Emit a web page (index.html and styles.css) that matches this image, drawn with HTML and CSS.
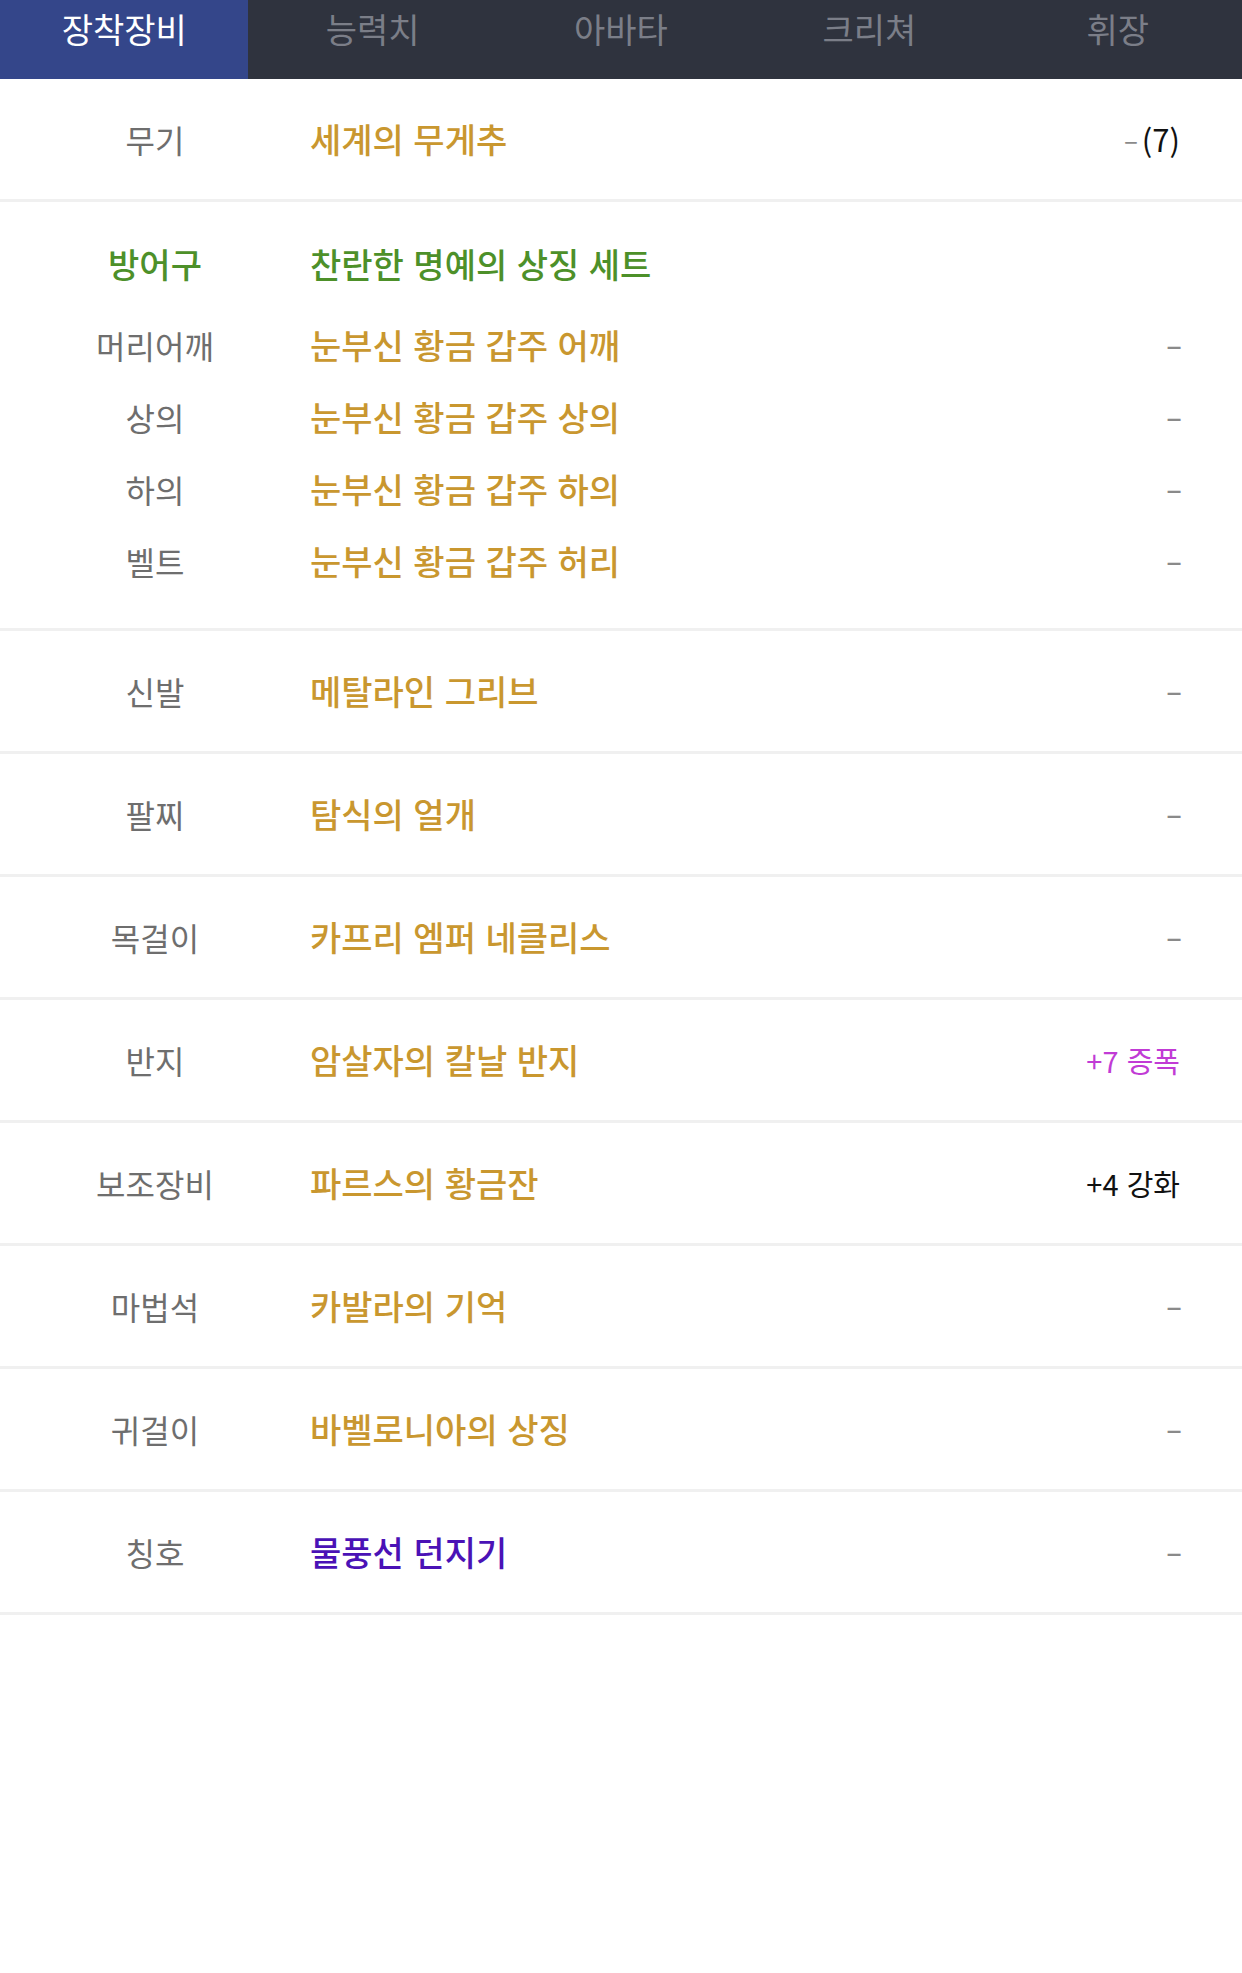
FILE: index.html
```html
<!DOCTYPE html>
<html lang="ko">
<head>
<meta charset="utf-8">
<title>장착장비</title>
<link rel="stylesheet" href="styles.css">
</head>
<body>
<nav class="tabs">
  <div class="tab active">장착장비</div>
  <div class="tab">능력치</div>
  <div class="tab">아바타</div>
  <div class="tab">크리쳐</div>
  <div class="tab">휘장</div>
</nav>
<main class="list">
  <div class="row">
    <span class="label">무기</span>
    <span class="name gold">세계의 무게추</span>
    <span class="value big"><span class="dash small">–</span>(7)</span>
  </div>
  <div class="group">
    <div class="sub head">
      <span class="label green">방어구</span>
      <span class="name green">찬란한 명예의 상징 세트</span>
      <span class="value"></span>
    </div>
    <div class="sub">
      <span class="label">머리어깨</span>
      <span class="name gold">눈부신 황금 갑주 어깨</span>
      <span class="value"><span class="dash">–</span></span>
    </div>
    <div class="sub">
      <span class="label">상의</span>
      <span class="name gold">눈부신 황금 갑주 상의</span>
      <span class="value"><span class="dash">–</span></span>
    </div>
    <div class="sub">
      <span class="label">하의</span>
      <span class="name gold">눈부신 황금 갑주 하의</span>
      <span class="value"><span class="dash">–</span></span>
    </div>
    <div class="sub">
      <span class="label">벨트</span>
      <span class="name gold">눈부신 황금 갑주 허리</span>
      <span class="value"><span class="dash">–</span></span>
    </div>
  </div>
  <div class="row">
    <span class="label">신발</span>
    <span class="name gold">메탈라인 그리브</span>
    <span class="value"><span class="dash">–</span></span>
  </div>
  <div class="row">
    <span class="label">팔찌</span>
    <span class="name gold">탐식의 얼개</span>
    <span class="value"><span class="dash">–</span></span>
  </div>
  <div class="row">
    <span class="label">목걸이</span>
    <span class="name gold">카프리 엠퍼 네클리스</span>
    <span class="value"><span class="dash">–</span></span>
  </div>
  <div class="row">
    <span class="label">반지</span>
    <span class="name gold">암살자의 칼날 반지</span>
    <span class="value amp">+7 증폭</span>
  </div>
  <div class="row">
    <span class="label">보조장비</span>
    <span class="name gold">파르스의 황금잔</span>
    <span class="value">+4 강화</span>
  </div>
  <div class="row">
    <span class="label">마법석</span>
    <span class="name gold">카발라의 기억</span>
    <span class="value"><span class="dash">–</span></span>
  </div>
  <div class="row">
    <span class="label">귀걸이</span>
    <span class="name gold">바벨로니아의 상징</span>
    <span class="value"><span class="dash">–</span></span>
  </div>
  <div class="row">
    <span class="label">칭호</span>
    <span class="name purple">물풍선 던지기</span>
    <span class="value"><span class="dash">–</span></span>
  </div>
</main>
</body>
</html>
```

FILE: styles.css
```css
* {
  box-sizing: border-box;
}

html, body {
  margin: 0;
  padding: 0;
  background: #ffffff;
}

body {
  font-family: "Noto Sans CJK KR", "Noto Sans", sans-serif;
  color: #000;
}

.tabs {
  display: grid;
  grid-template-columns: repeat(5, 1fr);
  height: 79px;
  background: #2f333e;
}

.tab {
  display: flex;
  justify-content: center;
  align-items: flex-start;
  padding-top: 9px;
  font-size: 34px;
  line-height: 1.2;
  color: #7b7e88;
}

.tab.active {
  background: #34468a;
  color: #ffffff;
}

.row,
.sub {
  display: grid;
  grid-template-columns: 310px 1fr auto;
  align-items: center;
  padding-right: 62px;
  line-height: 1.2;
}

.row {
  height: 123px;
  border-bottom: 3px solid #f0f0f0;
}

.group {
  display: flex;
  flex-direction: column;
  padding-top: 26px;
  padding-bottom: 31px;
  border-bottom: 3px solid #f0f0f0;
}

.sub {
  height: 72px;
}

.sub.head {
  margin-bottom: 9px;
}

.label {
  text-align: center;
  font-size: 32px;
  color: #6e6e6e;
}

.name {
  font-size: 34px;
  font-weight: 500;
}

.head .label {
  font-size: 34px;
  font-weight: 500;
}

.value {
  font-size: 29px;
  color: #111111;
  text-align: right;
}

.value.big {
  font-size: 31px;
}

.dash {
  color: #8a8a8a;
  font-weight: 500;
  margin-right: -2px;
  vertical-align: 4px;
}

.dash.small {
  font-size: 26px;
  font-weight: 400;
  margin-right: 4px;
  vertical-align: 2px;
}

.gold {
  color: #c9972f;
}

.green {
  color: #4d9029;
}

.purple {
  color: #4a12b6;
}

.amp {
  color: #c13bd5;
}
```
